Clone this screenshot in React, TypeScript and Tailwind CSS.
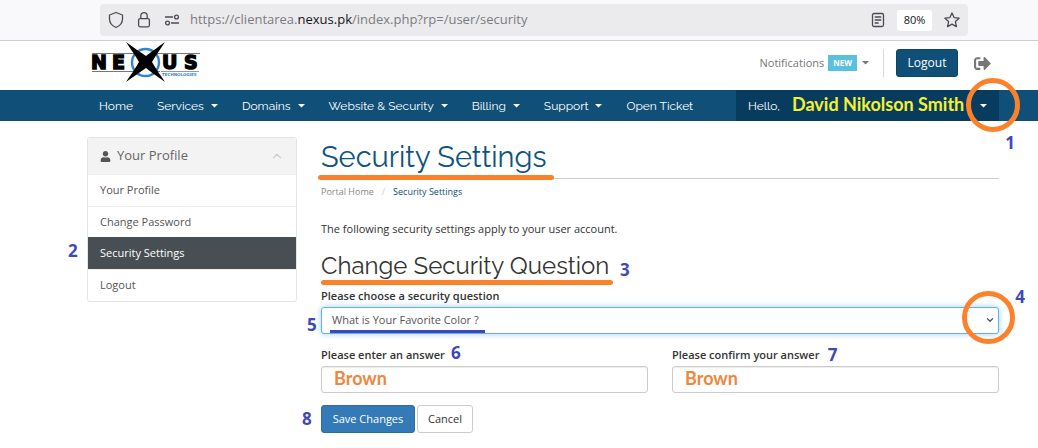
import React from "react";
import { FaUser, FaSignOutAlt } from "react-icons/fa";
import { ChevronUp, ChevronDown } from "lucide-react";

function Caret() {
  return (
    <svg width="7" height="4" viewBox="0 0 7 4" fill="currentColor" aria-hidden="true">
      <path d="M0 0h7L3.500 3.500z" />
    </svg>
  );
}

function Marker({ n, className }: { n: number; className: string }) {
  return (
    <span className={`absolute font-['Open_Sans',sans-serif] text-[17px] font-bold leading-5 text-[#3f48b8] ${className}`}>
      {n}
    </span>
  );
}

function BrowserBar() {
  return (
    <div className="flex h-[41px] items-start border-b border-[#cfcfd2] bg-[#f9f9fb] pl-[100px] pr-[70px] pt-1">
      <div className="flex h-8 flex-1 items-center rounded bg-[#ebebed] text-[#4b4b53]">
        <svg className="ml-2 shrink-0" width="16" height="18" viewBox="0 0 16 18" fill="none" stroke="currentColor" strokeWidth="1.300" strokeLinejoin="round" aria-hidden="true">
          <path d="M8 1.500 14.500 4v4c0 4-2.500 6.800-6.500 8.500C4 14.800 1.500 12 1.500 8V4z" />
        </svg>
        <svg className="ml-3 shrink-0" width="16" height="18" viewBox="0 0 16 18" fill="none" stroke="currentColor" strokeWidth="1.300" strokeLinejoin="round" aria-hidden="true">
          <rect x="2.600" y="7.600" width="10.800" height="8.200" rx="1.500" />
          <path d="M4.800 7.500V4.800a3.200 3.200 0 0 1 6.400 0v2.700" />
        </svg>
        <svg className="ml-3 shrink-0" width="16" height="18" viewBox="0 0 16 18" fill="none" stroke="currentColor" strokeWidth="1.300" aria-hidden="true">
          <path d="M1 6h8M7 12h8" />
          <circle cx="12.500" cy="6" r="1.900" />
          <circle cx="3.500" cy="12" r="1.900" />
        </svg>
        <div className="ml-2.5 flex-1 whitespace-nowrap font-['Open_Sans',sans-serif] text-[13px] text-[#7b7b80]">
          https://clientarea.<span className="text-[#15141a]">nexus.pk</span>/index.php?rp=/user/security
        </div>
        <svg className="mr-3 shrink-0" width="14" height="16" viewBox="0 0 14 16" fill="none" stroke="currentColor" strokeWidth="1.300" strokeLinecap="round" aria-hidden="true">
          <rect x="1.500" y="1.500" width="11" height="13" rx="1.500" />
          <path d="M4.200 5h5.600M4.200 8h5.600M4.200 11h3" />
        </svg>
        <span className="flex h-[21px] w-[35px] items-center justify-center rounded-[3px] bg-white font-['Open_Sans',sans-serif] text-[11px] text-[#15141a]">80%</span>
        <svg className="ml-3 mr-2 shrink-0" width="16" height="16" viewBox="0 0 16 16" fill="none" stroke="currentColor" strokeWidth="1.300" strokeLinejoin="round" aria-hidden="true">
          <path d="m8 1 2.100 4.600 5 .600-3.700 3.400 1 5L8 12.100l-4.400 2.500 1-5L.900 6.200l5-.600z" />
        </svg>
      </div>
    </div>
  );
}

function Logo() {
  return (
    <svg width="110" height="42" viewBox="0 0 110 42" role="img" aria-label="Nexus Technologies">
      <path d="M1 12.500h108M1 30.500h68" stroke="#777" strokeWidth="1" />
      <path d="M70 30.500h38" stroke="#999" strokeWidth="1" />
      <circle cx="54.500" cy="21.500" r="13.500" fill="#fff" stroke="#2f86d6" strokeWidth="2.400" />
      <g fill="#000" stroke="#000" strokeWidth="1.400" fontFamily="DejaVu Sans, sans-serif" fontWeight="700" fontSize="19">
        <text x="0" y="28">N</text>
        <text x="21" y="28">E</text>
        <text x="71" y="28">U</text>
        <text x="93" y="28">S</text>
      </g>
      <path d="M35 1 C42 6 49 11 55 15 C60 11 67 6 74 1 C70 7 65 14 61 21 C65 28 70 35 74 41 C67 36 60 31 55 27 C49 31 42 36 35 41 C39 35 44 28 48 21 C44 14 39 7 35 1z" fill="#000" />
      <text x="71" y="35" fill="#2f86d6" fontFamily="DejaVu Sans, sans-serif" fontWeight="700" fontSize="4">TECHNOLOGIES</text>
    </svg>
  );
}

function Header() {
  return (
    <header className="flex h-[49px] items-start bg-white pl-[91px] pr-[47px]">
      <a href="#home"><Logo /></a>
      <div className="ml-auto flex items-center pt-2">
        <button type="button" className="flex items-center text-[11px] text-[#777]">
          Notifications
          <span className="ml-1 flex h-4 items-center bg-[#5bc0de] px-[5px] text-[8px] font-bold text-white">NEW</span>
          <span className="ml-[5px]"><Caret /></span>
        </button>
        <span className="ml-3.5 h-7 w-px bg-[#d8d8d8]" />
        <button type="button" className="ml-3 h-7 w-[62px] rounded-[3px] border border-[#0b4468] bg-[#0f4f78] text-[12px] text-white">Logout</button>
        <a href="#return" aria-label="Return" className="ml-4 text-[#777]"><FaSignOutAlt size={17} /></a>
      </div>
    </header>
  );
}

const links = [
  { label: "Home", menu: false },
  { label: "Services", menu: true },
  { label: "Domains", menu: true },
  { label: "Website & Security", menu: true },
  { label: "Billing", menu: true },
  { label: "Support", menu: true },
  { label: "Open Ticket", menu: false },
];

function Nav() {
  return (
    <nav className="flex h-[31px] bg-[#0f4f78] pl-[99px] pr-[39px] font-['Raleway','Lato',sans-serif] text-[12px] text-white">
      <div className="flex items-center gap-6">
        {links.map((l) => (
          <a key={l.label} href="#nav" className="flex items-center gap-[7px] whitespace-nowrap">
            {l.label}
            {l.menu && <Caret />}
          </a>
        ))}
      </div>
      <button type="button" className="relative ml-auto flex w-[263px] items-center bg-[#073c5f] pl-3 pr-3">
        Hello,
        <span className="ml-3 whitespace-nowrap pb-1 font-['Lato',sans-serif] text-[18px] font-bold leading-6 text-[#f5f032]">David Nikolson Smith</span>
        <span className="ml-auto"><Caret /></span>
        <span className="absolute -right-[21px] -top-3 size-[54px] rounded-full border-[5px] border-[#fb822b]" />
        <Marker n={1} className="-right-4 top-[43px]" />
      </button>
    </nav>
  );
}

const profileLinks = ["Your Profile", "Change Password", "Security Settings", "Logout"];

function Sidebar() {
  return (
    <aside className="relative w-[210px] shrink-0 self-start rounded-[3px] border border-[#e4e4e4] text-[#555]">
      <h3 className="flex h-9 items-center bg-[#f3f3f3] px-3 text-[13px] text-[#666]">
        <FaUser size={11} className="mr-1.5 text-[#555]" />
        Your Profile
        <ChevronUp size={14} strokeWidth={2} className="ml-auto text-[#ccc]" />
      </h3>
      <ul>
        {profileLinks.map((label) => (
          <li key={label} className="border-t border-[#eee]">
            <a
              href="#profile"
              className={
                label === "Security Settings"
                  ? "-mt-0.5 flex h-8 items-center bg-[#474f54] px-3 text-[11px] text-white"
                  : "flex h-[31px] items-center px-3 text-[11px]"
              }
            >
              {label}
            </a>
          </li>
        ))}
      </ul>
      <Marker n={2} className="-left-5 top-[103px]" />
    </aside>
  );
}

const inputClass =
  "block h-[27px] w-full rounded-[3px] border border-[#ccc] bg-white px-3 pb-1 font-['Lato',sans-serif] text-[18px] font-bold leading-5 text-[#ee873f] shadow-[inset_0_1px_1px_rgba(0,0,0,0.075)] outline-none";

function SecurityForm() {
  return (
    <main className="min-w-0 flex-1 text-[#333]">
      <div className="relative h-[42px] border-b border-[#ccc]">
        <h1 className="whitespace-nowrap font-['Raleway','Lato',sans-serif] text-[29px] leading-10 text-[#0f5480]">Security Settings</h1>
        <span className="absolute -bottom-[2px] -left-[3px] h-[5px] w-[236px] rounded-full bg-[#fb822b]" />
      </div>
      <nav className="mt-1 flex h-[18px] items-center text-[9px]">
        <a href="#portal" className="text-[#888]">Portal Home</a>
        <span className="mx-2 text-[#ccc]">/</span>
        <span className="text-[#0f4f78]">Security Settings</span>
      </nav>
      <p className="mt-[19px] text-[11px] leading-[18px]">The following security settings apply to your user account.</p>
      <div className="relative mt-3 h-[34px]">
        <h2 className="whitespace-nowrap font-['Raleway','Lato',sans-serif] text-[24px] leading-8">Change Security Question</h2>
        <span className="absolute -bottom-px left-0 h-[5px] w-[292px] rounded-full bg-[#fb822b]" />
        <Marker n={3} className="left-[299px] top-2.5" />
      </div>
      <form>
        <label htmlFor="question" className="mt-1 block text-[11px] font-semibold leading-4">Please choose a security question</label>
        <div className="relative mt-[3px]">
          <select
            id="question"
            className="block h-[27px] w-full appearance-none rounded-[3px] border border-[#66afe9] bg-white px-2.5 text-[11px] text-[#555] shadow-[0_0_6px_rgba(102,175,233,0.6)] outline-none"
          >
            <option>What is Your Favorite Color ?</option>
          </select>
          <ChevronDown size={10} strokeWidth={3} className="pointer-events-none absolute right-1 top-2 text-[#555]" />
          <span className="absolute bottom-px left-[9px] h-[3px] w-[155px] bg-[#3f48b8]" />
          <span className="pointer-events-none absolute -right-4 -top-4 size-[53px] rounded-full border-[5px] border-[#fb822b]" />
          <Marker n={4} className="-right-[26px] -top-5" />
          <Marker n={5} className="-left-3.5 top-2" />
        </div>
        <div className="mt-[13px] grid grid-cols-2 gap-6">
          <div>
            <label htmlFor="answer" className="relative mb-[3px] block w-fit text-[11px] font-semibold leading-4">
              Please enter an answer
              <Marker n={6} className="-right-4 -top-1" />
            </label>
            <input id="answer" type="text" defaultValue="Brown" className={inputClass} />
          </div>
          <div>
            <label htmlFor="confirm" className="relative mb-[3px] block w-fit text-[11px] font-semibold leading-4">
              Please confirm your answer
              <Marker n={7} className="-right-[18px] -top-0.5" />
            </label>
            <input id="confirm" type="text" defaultValue="Brown" className={inputClass} />
          </div>
        </div>
        <div className="relative mt-3 flex gap-0.5 text-[11px]">
          <button type="submit" className="h-7 w-[94px] rounded-[3px] border border-[#2e6da4] bg-[#337ab7] text-white">Save Changes</button>
          <button type="button" className="h-7 w-14 rounded-[3px] border border-[#ccc] bg-white">Cancel</button>
          <Marker n={8} className="-left-[19px] top-1" />
        </div>
      </form>
    </main>
  );
}

export default function App() {
  return (
    <div className="min-h-screen bg-white font-['Open_Sans',sans-serif]">
      <BrowserBar />
      <Header />
      <Nav />
      <div className="flex gap-6 pl-[87px] pr-[39px] pt-4">
        <Sidebar />
        <SecurityForm />
      </div>
    </div>
  );
}
